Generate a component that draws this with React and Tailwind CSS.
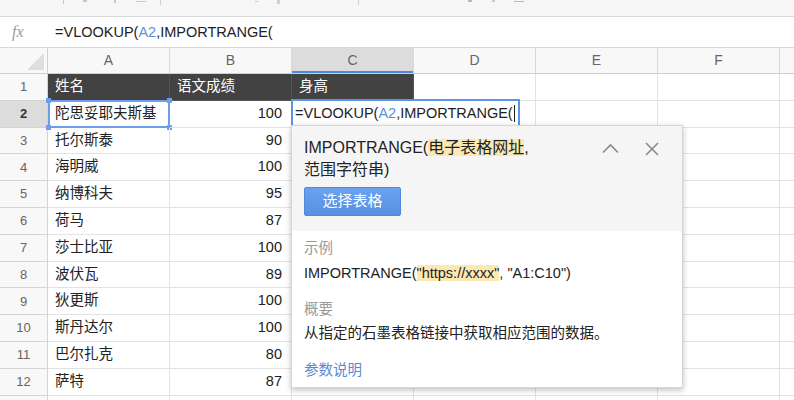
import React from "react";

const rows = [
  ["姓名", "语文成绩", "身高"],
  ["陀思妥耶夫斯基", "100", ""],
  ["托尔斯泰", "90", ""],
  ["海明威", "100", ""],
  ["纳博科夫", "95", ""],
  ["荷马", "87", ""],
  ["莎士比亚", "100", ""],
  ["波伏瓦", "89", ""],
  ["狄更斯", "100", ""],
  ["斯丹达尔", "100", ""],
  ["巴尔扎克", "80", ""],
  ["萨特", "87", ""],
  ["", "", ""],
];

const letters = ["A", "B", "C", "D", "E", "F", "G"];

function Formula() {
  return (
    <>
      =VLOOKUP(<span className="text-[#5b8fd9]">A2</span>,IMPORTRANGE(
    </>
  );
}

export default function App() {
  return (
    <div
      className="relative w-[794px] h-[400px] overflow-hidden bg-white text-[#222]"
      style={{ fontFamily: '"Liberation Sans", Arial, "Noto Sans CJK SC", sans-serif' }}
    >
      {/* toolbar remnant */}
      <div className="flex items-start h-[17px] bg-[#f6f6f6] border-b border-[#dadada]">
        <span className="ml-[63px] w-[1px] h-[4px] bg-[#c8c8c8]" />
        <span className="ml-[19px] w-[4px] h-[2px] bg-[#c8c8c8]" />
        <span className="ml-[27px] w-[2px] h-[3px] bg-[#c8c8c8]" />
        <span className="ml-[20px] mt-[1px] w-[10px] h-[1px] bg-[#c8c8c8]" />
        <span className="ml-[14px] w-[1px] h-[5px] bg-[#d0d0d0]" />
        <span className="ml-[94px] mt-[1px] w-[3px] h-[1px] bg-[#c8c8c8]" />
        <span className="ml-[19px] w-[3px] h-[4px] bg-[#d0d0d0]" />
        <span className="ml-[78px] w-[1px] h-[5px] bg-[#d0d0d0]" />
        <span className="ml-[109px] w-[4px] h-[2px] bg-[#b8b8b8]" />
        <span className="ml-[20px] w-[3px] h-[2px] bg-[#c8c8c8]" />
        <span className="ml-[19px] mt-[1px] w-[10px] h-[1px] bg-[#b8b8b8]" />
      </div>

      {/* formula bar */}
      <div className="flex items-center h-[31px] border-b border-[#d9d9d9] bg-white">
        <div
          className="w-[48px] pl-[12px] text-[16px] italic text-[#9a9a9a]"
          style={{ fontFamily: '"Liberation Serif", "Times New Roman", serif' }}
        >
          fx
        </div>
        <div className="pl-[7px] text-[14.5px] leading-[20px] text-[#222]">
          <Formula />
        </div>
      </div>

      {/* column header */}
      <div className="flex h-[26px] bg-[#f8f8f8] border-b border-[#cfcfcf]">
        <div className="w-[48px] shrink-0 border-r border-[#cfcfcf] flex items-end justify-end pr-[3px] pb-[3px]">
          <div className="w-0 h-0 border-l-[17px] border-l-transparent border-b-[17px] border-b-[#dedede]" />
        </div>
        {letters.map((l) => (
          <div
            key={l}
            className={`w-[122px] shrink-0 flex items-center justify-center border-r text-[14px] text-[#666] ${
              l === "C" ? "bg-[#dcdcdc] border-[#d9d9d9] shadow-[inset_0_-2px_0_#4d8ae6]" : "border-[#d9d9d9]"
            }`}
          >
            {l !== "G" ? l : ""}
          </div>
        ))}
      </div>

      {/* rows */}
      <div className="flex flex-col">
        {rows.map((r, i) => {
          const n = i + 1;
          const dark = n === 1;
          return (
            <div key={n} className="flex h-[26.8px] shrink-0">
              <div
                className={`w-[48px] shrink-0 flex items-center justify-center border-r border-b border-[#d4d4d4] text-[13px] ${
                  n === 2 ? "bg-[#dcdcdc] text-[#333] font-bold" : "bg-[#f8f8f8] text-[#666]"
                }`}
              >
                {n < 13 ? n : ""}
              </div>
              {letters.map((l, c) => {
                const val = c < 3 ? r[c] : "";
                const isDark = dark && c < 3;
                return (
                  <div
                    key={l}
                    className={`relative w-[122px] shrink-0 flex items-center border-r border-b text-[14.5px] ${
                      isDark ? "bg-[#424242] text-white border-[#555]" : "border-[#e2e2e2]"
                    } ${c === 1 && !dark ? "justify-end pr-[9px]" : "pl-[7px]"}`}
                  >
                    {val && <span className="whitespace-nowrap">{val}</span>}
                    {n === 2 && c === 0 && (
                      <div className="absolute left-0 top-[-1px] right-[-1px] bottom-[-1px] border-2 border-[#6d9eeb]">
                        <span className="absolute left-[-4px] top-[-4px] w-[5px] h-[5px] bg-[#6d9eeb]" />
                        <span className="absolute right-[-4px] top-[-4px] w-[5px] h-[5px] bg-[#6d9eeb]" />
                        <span className="absolute left-[-4px] bottom-[-4px] w-[5px] h-[5px] bg-[#6d9eeb]" />
                        <span className="absolute right-[-4px] bottom-[-4px] w-[5px] h-[5px] bg-[#6d9eeb]" />
                      </div>
                    )}
                  </div>
                );
              })}
            </div>
          );
        })}
      </div>

      {/* in-cell editor */}
      <div className="absolute left-[291px] top-[99px] w-[229px] h-[29px] bg-white border-2 border-[#5b95e6] flex items-center pl-[2px] text-[14.5px] text-[#222] whitespace-nowrap">
        <Formula />
        <span className="inline-block w-[1px] h-[17px] bg-[#222] ml-[1px]" />
      </div>

      {/* function help popup */}
      <div className="absolute left-[291px] top-[125px] w-[392px] h-[263px] bg-white border border-[#d6d6d6] shadow-[0_2px_6px_rgba(0,0,0,0.25)] flex flex-col">
        <div className="bg-[#f5f5f5] h-[105px] pl-[12px] pt-[11px] flex">
          <div className="flex flex-col">
            <div className="text-[16px] leading-[22px] text-[#222]">
              IMPORTRANGE(<span className="bg-[#fce8b2]">电子表格网址</span>,
            </div>
            <div className="text-[16px] leading-[22px] text-[#222]">范围字符串)</div>
            <div className="mt-[6px] w-[97px] h-[29px] rounded-[2px] bg-gradient-to-b from-[#6aa2ee] to-[#5890e4] border border-[#5088dc] flex items-center justify-center text-[15px] text-white">
              选择表格
            </div>
          </div>
          <div className="ml-auto mr-[23px] mt-[5px] flex items-start gap-[26px] h-[16px]">
            <svg className="mt-[1px]" width="17" height="11" viewBox="0 0 17 11" fill="none">
              <polyline points="1,9.5 8.5,2 16,9.5" stroke="#8a8a8a" strokeWidth="1.6" />
            </svg>
            <svg width="14" height="14" viewBox="0 0 14 14" fill="none">
              <line x1="1" y1="1" x2="13" y2="13" stroke="#8a8a8a" strokeWidth="1.6" />
              <line x1="13" y1="1" x2="1" y2="13" stroke="#8a8a8a" strokeWidth="1.6" />
            </svg>
          </div>
        </div>
        <div className="pl-[12px] pt-[5px] text-[14.5px] flex flex-col">
          <div className="h-[24px] leading-[24px] text-[#9a9a9a]">示例</div>
          <div className="mt-[1px] h-[24px] leading-[24px] text-[#222] whitespace-nowrap">
            IMPORTRANGE(<span className="bg-[#fce8b2]">"https://xxxx"</span>, "A1:C10")
          </div>
          <div className="mt-[12px] h-[24px] leading-[24px] text-[#9a9a9a]">概要</div>
          <div className="h-[24px] leading-[24px] text-[#222]">
            从指定的石墨表格链接中获取相应范围的数据。
          </div>
          <div className="mt-[13px] h-[24px] leading-[24px] text-[#5a8ad4]">参数说明</div>
        </div>
      </div>
    </div>
  );
}
